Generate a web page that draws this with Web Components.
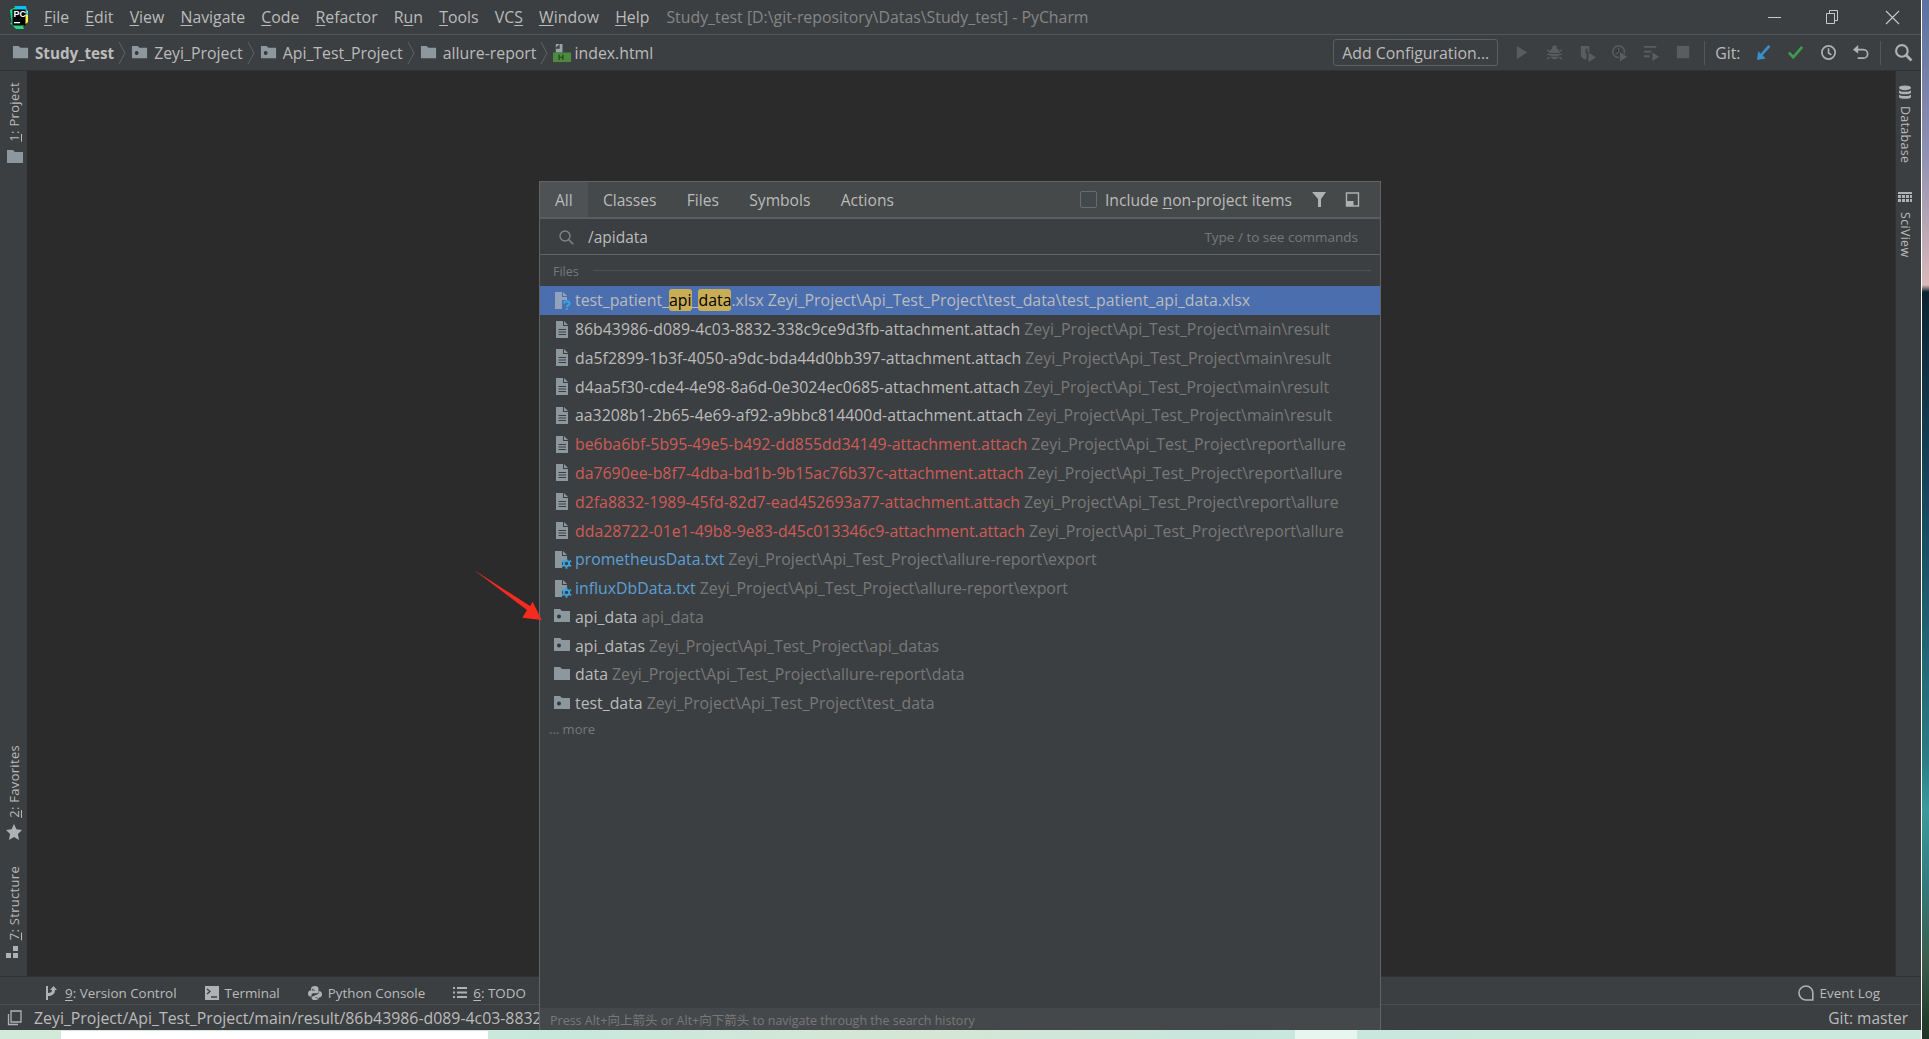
<!DOCTYPE html>
<html>
<head>
<meta charset="utf-8">
<title>PyCharm</title>
<style>
  html, body { margin: 0; height: 100%; overflow: hidden; background: #3c3f41; }
  body { font-family: "Open Sans", "Noto Sans CJK SC", sans-serif; }
</style>
</head>
<body>
<desktop-frame>
  <ide-window></ide-window>
</desktop-frame>

<script>
const ICONS = {
  folder: `<path fill="#8c979e" d="M1 2h6l2 2h8v11H1z"/>`,
  module: `<path fill="#8c979e" d="M1 2h6l2 2h8v11H1z"/><circle cx="6" cy="9.5" r="2" fill="#33383b"/>`,
  text: `<path fill="#8c979e" d="M3 1h7v5h5v12H3z"/><path fill="#8c979e" d="M11 1l4 4h-4z"/><path stroke="#3c3f41" stroke-width="1.2" d="M5.500 9.500h7.500M5.500 12h7.500M5.500 14.500h7.500"/>`,
  unknown: `<path fill="#8fa3bd" d="M2 1h7v5h5v12H2z"/><path fill="#8fa3bd" d="M10 1l4 4h-4z"/><path fill="#4b6eaf" d="M9 9h10v10H9z"/><path fill="none" stroke="#35a8e6" stroke-width="1.9" d="M11 12.500c0-3 5.500-3 5.500 0 0 2-2.700 1.800-2.700 3.600"/><rect x="12.800" y="17" width="2" height="2" fill="#35a8e6"/>`,
  gear: `<path fill="#8c979e" d="M2 1h7v5h5v5H9v7H2z"/><path fill="#8c979e" d="M10 1l4 4h-4z"/><path stroke="#3aa3dd" stroke-width="1.800" d="M13.500 8.200v10.600M8.900 10.800l9.200 5.400M8.900 16.200l9.200-5.400"/><circle cx="13.500" cy="13.500" r="3.600" fill="#3aa3dd"/><circle cx="13.500" cy="13.500" r="1.700" fill="#3c3f41"/>`,
  html: `<path fill="#9aa4aa" d="M3 0h7v9H3z"/><path fill="#3c3f41" d="M7 0L3 4v1h4z"/><rect y="9" width="19" height="10" fill="#4c8a3e"/><path stroke="#23401c" stroke-width="1.2" d="M6.500 11v6M10.500 11v6M6.500 14h4"/>`,
  search: `<circle cx="7" cy="7" r="5" fill="none" stroke="#7f8487" stroke-width="1.4"/><path stroke="#7f8487" stroke-width="1.6" d="M10.800 10.800l4.400 4.400"/>`,
  funnel: `<path fill="#afb1b3" d="M1 1h14L10 8v8H7V8z"/>`,
  layout: `<path fill="none" stroke="#afb1b3" stroke-width="1.4" d="M2 2h12v13H2z"/><path fill="#afb1b3" d="M2 10h7v5H2z"/>`,
  play: `<path fill="#5a5c5e" d="M3 2l11 7-11 7z"/>`,
  bug: `<ellipse cx="9" cy="10" rx="5.500" ry="6" fill="#5a5c5e"/><circle cx="9" cy="4" r="2.600" fill="#5a5c5e"/><path stroke="#5a5c5e" stroke-width="1.400" d="M1 6l3 2M17 6l-3 2M1 11h3M17 11h-3M1 16l3-2M17 16l-3-2"/><path stroke="#3c3f41" d="M4 10h10M4 13h10"/>`,
  cover: `<path fill="#5a5c5e" d="M2 2h9v6l-3 2v6l-3 0-3-3z"/><path fill="#5a5c5e" d="M10 9l8 5-8 5z"/><path fill="#3c3f41" d="M7 5h2v5H7z"/>`,
  profile: `<circle cx="8" cy="8" r="6.200" fill="none" stroke="#5a5c5e" stroke-width="1.600"/><path stroke="#5a5c5e" stroke-width="1.400" d="M8 4v4l-2.500 2.500"/><path fill="#5a5c5e" stroke="#3c3f41" d="M9 8l9 5.500-9 5.500z"/>`,
  runall: `<path stroke="#5a5c5e" stroke-width="2" d="M1 3h13M1 8h8M1 13h6"/><path fill="#5a5c5e" d="M10 9l7 4.500-7 4.500z"/>`,
  stop: `<rect x="2" y="2" width="13" height="13" fill="#5a5c5e"/>`,
  update: `<path fill="#3a8fc9" d="M14 1l2.400 2L8 12l3.200 3.200L2 17l1.400-9.400L6 10.400z"/>`,
  check: `<path fill="none" stroke="#3f9c4b" stroke-width="2.800" d="M2 9l4.600 5L16 3"/>`,
  clock: `<circle cx="9" cy="9" r="7" fill="none" stroke="#afb1b3" stroke-width="1.800"/><path fill="none" stroke="#afb1b3" stroke-width="1.700" d="M9 4.500V9.500l3 2"/>`,
  undo: `<path fill="none" stroke="#afb1b3" stroke-width="1.800" d="M5 6h7a4.300 4.300 0 0 1 0 9H6"/><path fill="#afb1b3" d="M6.500 1L1 6l5.500 4z"/>`,
  find: `<circle cx="7.500" cy="7.500" r="5.500" fill="none" stroke="#afb1b3" stroke-width="2"/><path stroke="#afb1b3" stroke-width="2.600" d="M11.600 11.600l5 5"/>`,
  star: `<path fill="#afb1b3" d="M8 0l2.400 5.300 5.600.7-4.100 3.900L13 16 8 13l-5 3 1.100-6.100L0 6l5.600-.7z"/>`,
  struct: `<path fill="#afb1b3" d="M7 0h5v5H7zM0 7h5v5H0zM7 7h5v5H7z"/>`,
  db: `<ellipse cx="7" cy="2.800" rx="6" ry="2.400" fill="#afb1b3"/><path fill="#afb1b3" d="M1 5.200c1.500 2 10.500 2 12 0v2.600c-1.500 2-10.500 2-12 0zM1 9.600c1.500 2 10.500 2 12 0v2.600c-1.500 2-10.500 2-12 0z"/>`,
  sci: `<path fill="#afb1b3" d="M0 1h14v2H0zM0 4h3v3H0zM4 4h3v3H4zM8 4h3v3H8zM12 4h2v3h-2zM0 8h3v3H0zM4 8h3v3H4zM8 8h3v3H8zM12 8h2v3h-2z"/>`,
  vcs: `<path fill="#afb1b3" d="M1 0h2v14H1zM3 7c3 0 4-1 4-3H5l3.500-4L12 4h-2c0 4-3 6-7 6z"/>`,
  term: `<rect width="14" height="14" fill="#afb1b3"/><path fill="none" stroke="#3c3f41" stroke-width="1.300" d="M2 3l3 2.500L2 8M6 11h6"/>`,
  python: `<path fill="#afb1b3" d="M3.500 6.500V3C3.500 1.200 5.500 0 8 0s4 1.200 4 3v3.500c0 1-.8 1.700-1.700 1.700H6c-1.200 0-2 .8-2 2V12H2.500C1 12 0 10.500 0 8.500S1 5 2.500 5H8v-.8H6V2.800H5.500z"/><path fill="#afb1b3" d="M12.500 9.500V13c0 1.800-2 3-4.500 3s-4-1.200-4-3V12.400h.5l5.700-2.800c1.200 0 2-.8 2-2V6H13.500C15 6 16 7.500 16 9.500S15 13 13.500 13H8v.8h2v1.400h.5z"/>`,
  todo: `<path stroke="#afb1b3" stroke-width="2" d="M0 2h2M4 2h10M0 6.500h2M4 6.500h10M0 11h2M4 11h10"/>`,
  log: `<path fill="none" stroke="#afb1b3" stroke-width="1.600" d="M8 1a6.800 6.800 0 0 1 6.800 6.800V15H8A7 7 0 0 1 8 1z"/>`,
  copy: `<path fill="none" stroke="#afb1b3" stroke-width="1.300" d="M4 1h10v11H4zM1.500 4v10.500H11"/>`,
  min: `<path stroke="#c8c8c8" stroke-width="1" d="M1 7.500h13"/>`,
  restore: `<path fill="none" stroke="#c8c8c8" d="M.5 3.500h8v10h-8zM3.500 3.500v-3h8v10h-3"/>`,
  close: `<path stroke="#c8c8c8" stroke-width="1.100" d="M1 1l13 13M14 1L1 14"/>`
};

class IdeIcon extends HTMLElement {
  connectedCallback() {
    const size = this.getAttribute("size") || 18;
    const box = this.getAttribute("box") || "0 0 19 19";
    this.attachShadow({ mode: "open" }).innerHTML = `
      <style>
        :host { display: inline-flex; flex: none; }
        svg { width: ${size}px; height: ${size}px; display: block; overflow: visible; }
      </style>
      <svg viewBox="${box}">${ICONS[this.getAttribute("name")]}</svg>`;
  }
}
customElements.define("ide-icon", IdeIcon);

class PcLogo extends HTMLElement {
  connectedCallback() {
    this.attachShadow({ mode: "open" }).innerHTML = `
      <style>
        :host { display: inline-flex; flex: none; }
        svg { width: 20px; height: 25px; display: block; }
        text { font: 700 9px "Liberation Sans", sans-serif; fill: #fff; }
      </style>
      <svg viewBox="0 0 20 25">
        <path fill="#21d789" d="M1 5l8-4 3 6-9 12z"/>
        <path fill="#fcf84a" d="M19 6l-8-5 2 21 6-5z"/>
        <path fill="#07c3f2" d="M5 1h12l2 9-8-2z"/>
        <path fill="#21d789" d="M1 18l6 6h8l-3-8z"/>
        <rect x="3.500" y="4.500" width="13" height="16" fill="#000"/>
        <text x="4.500" y="12">PC</text>
        <rect x="5" y="17" width="6" height="1.300" fill="#fff"/>
      </svg>`;
  }
}
customElements.define("pc-logo", PcLogo);

class TitleBar extends HTMLElement {
  connectedCallback() {
    this.attachShadow({ mode: "open" }).innerHTML = `
      <style>
        :host {
          display: flex; align-items: center; height: 35px; box-sizing: border-box;
          background: #3c3f41; border-bottom: 1px solid #515658;
          padding-left: 9px; font-size: 15.85px; color: #bbbbbb; white-space: nowrap;
        }
        .menu { display: flex; margin-left: 15px; gap: 16.2px; }
        .title { margin-left: 17px; color: #868686; }
        .win { margin-left: auto; display: flex; gap: 44px; padding-right: 21px; }
        u { text-underline-offset: 2px; }
      </style>
      <pc-logo></pc-logo>
      <div class="menu">
        <span><u>F</u>ile</span><span><u>E</u>dit</span><span><u>V</u>iew</span>
        <span><u>N</u>avigate</span><span><u>C</u>ode</span><span><u>R</u>efactor</span>
        <span>R<u>u</u>n</span><span><u>T</u>ools</span><span>VC<u>S</u></span>
        <span><u>W</u>indow</span><span><u>H</u>elp</span>
      </div>
      <span class="title">Study_test [D:\\git-repository\\Datas\\Study_test] - PyCharm</span>
      <div class="win">
        <ide-icon name="min" size="15" box="0 0 15 15"></ide-icon>
        <ide-icon name="restore" size="15" box="0 0 15 15"></ide-icon>
        <ide-icon name="close" size="15" box="0 0 15 15"></ide-icon>
      </div>`;
  }
}
customElements.define("title-bar", TitleBar);

class NavBar extends HTMLElement {
  connectedCallback() {
    const crumb = (icon, text, bold) => `
      <span class="crumb"><ide-icon name="${icon}"></ide-icon><span class="${bold ? "b" : ""}">${text}</span></span>
      <svg class="chev" viewBox="0 0 8 24"><path fill="none" stroke="#5f6365" d="M1 1l6 11-6 11"/></svg>`;
    const tool = (name) => `<ide-icon name="${name}" size="18"></ide-icon>`;
    this.attachShadow({ mode: "open" }).innerHTML = `
      <style>
        :host {
          display: flex; align-items: center; height: 36px; box-sizing: border-box;
          background: #3c3f41; border-bottom: 1px solid #323232;
          padding-left: 12px; font-size: 15.85px; color: #bbbbbb; white-space: nowrap;
        }
        .crumb { display: flex; align-items: center; gap: 5px; }
        .b { font-weight: 700; font-size: 15.2px; }
        .chev { width: 8px; height: 24px; margin: 0 5px 0 4px; flex: none; }
        .right { margin-left: auto; display: flex; align-items: center; }
        button {
          font: inherit; color: #bbbbbb; background: #3c3f41; height: 27px; width: 165px;
          border: 1px solid #5e6060; border-radius: 3px; padding: 0;
        }
        .tools { display: flex; align-items: center; gap: 14.2px; margin-left: 16px; }
        .sep { width: 1px; height: 24px; background: #515658; }
        .git { margin-left: 10px; margin-right: 14px; }
        .vcs { display: flex; align-items: center; gap: 14.5px; }
        .find { margin: 0 7px 0 13px; }
      </style>
      ${crumb("folder", "Study_test", true)}
      ${crumb("module", "Zeyi_Project")}
      ${crumb("module", "Api_Test_Project")}
      ${crumb("folder", "allure-report")}
      <span class="crumb" style="gap:3px"><ide-icon name="html"></ide-icon><span>index.html</span></span>
      <div class="right">
        <button>Add Configuration...</button>
        <div class="tools">
          ${tool("play")}${tool("bug")}${tool("cover")}${tool("profile")}${tool("runall")}${tool("stop")}
        </div>
        <span class="sep" style="margin-left:11px"></span>
        <span class="git">Git:</span>
        <div class="vcs">${tool("update")}${tool("check")}${tool("clock")}${tool("undo")}</div>
        <span class="sep" style="margin-left:10px"></span>
        <ide-icon class="find" name="find" size="20"></ide-icon>
      </div>`;
  }
}
customElements.define("nav-bar", NavBar);

// one rotated button in the left or right tool strip
class StripItem extends HTMLElement {
  connectedCallback() {
    const side = this.getAttribute("side") || "left";
    const icon = `<ide-icon name="${this.getAttribute("icon")}" size="15" box="0 0 15 15"></ide-icon>`;
    this.attachShadow({ mode: "open" }).innerHTML = `
      <style>
        :host { display: flex; flex-direction: column; align-items: center; gap: 6px; color: #bbbbbb; font-size: 13px; letter-spacing: .3px; }
        :host([side="right"]) { font-size: 12.5px; }
        span { writing-mode: vertical-rl; white-space: nowrap; }
        :host([side="left"]) span { transform: rotate(180deg); }
        u { text-underline-offset: 2px; }
      </style>
      ${side === "right" ? icon : ""}<span><slot></slot></span>${side === "left" ? icon : ""}`;
  }
}
customElements.define("strip-item", StripItem);

class ToolBar extends HTMLElement {
  connectedCallback() {
    this.attachShadow({ mode: "open" }).innerHTML = `
      <style>
        :host {
          display: flex; align-items: center; height: 29px; box-sizing: border-box;
          background: #3c3f41; border-top: 1px solid #323232; border-bottom: 1px solid #4a4c4e;
          padding: 4px 0 0 45px; font-size: 13.4px; color: #bbbbbb; white-space: nowrap;
        }
        .item { display: flex; align-items: center; gap: 6px; margin-right: 28px; }
        .end { margin: 0 41px 0 auto; }
        u { text-underline-offset: 2px; }
      </style>
      <span class="item"><ide-icon name="vcs" size="14" box="0 0 14 14"></ide-icon><span><u>9</u>: Version Control</span></span>
      <span class="item"><ide-icon name="term" size="14" box="0 0 14 14"></ide-icon><span>Terminal</span></span>
      <span class="item"><ide-icon name="python" size="14" box="0 0 16 16"></ide-icon><span>Python Console</span></span>
      <span class="item"><ide-icon name="todo" size="14" box="0 0 14 14"></ide-icon><span><u>6</u>: TODO</span></span>
      <span class="item end"><ide-icon name="log" size="16" box="0 0 16 16"></ide-icon><span>Event Log</span></span>`;
  }
}
customElements.define("tool-bar", ToolBar);

class StatusBar extends HTMLElement {
  connectedCallback() {
    this.attachShadow({ mode: "open" }).innerHTML = `
      <style>
        :host {
          display: flex; align-items: center; height: 25px; box-sizing: border-box;
          background: #3c3f41; padding: 0 13px 0 7px; font-size: 15.5px; color: #bbbbbb; white-space: nowrap;
        }
        .path { margin-left: 11px; font-size: 15.85px; }
        .git { margin-left: auto; }
      </style>
      <ide-icon name="copy" size="16" box="0 0 16 16"></ide-icon>
      <span class="path">Zeyi_Project/Api_Test_Project/main/result/86b43986-d089-4c03-8832</span>
      <span class="git">Git: master</span>`;
  }
}
customElements.define("status-bar", StatusBar);

class ResultRow extends HTMLElement {
  connectedCallback() {
    this.attachShadow({ mode: "open" }).innerHTML = `
      <style>
        :host {
          display: flex; align-items: center; height: 28.78px; padding-left: 13px; gap: 3px;
          color: #bbbbbb; white-space: nowrap; font-size: 15.85px;
        }
        :host([tone="red"]) .name { color: #cf5b56; }
        :host([tone="blue"]) .name { color: #5c9fd6; }
        :host([selected]) { background: #4b6eaf; }
        .path { color: #787878; margin-left: 4px; }
        :host([selected]) .path { color: #bbbbbb; }
        ::slotted(mark) { background: #c9ad55; color: #000; border-radius: 3px; }
      </style>
      <ide-icon name="${this.getAttribute("icon")}" size="19"></ide-icon>
      <span><span class="name"><slot></slot></span><span class="path">${this.getAttribute("path")}</span></span>`;
  }
}
customElements.define("result-row", ResultRow);

const MAIN = "Zeyi_Project\\Api_Test_Project\\main\\result";
const ALLURE = "Zeyi_Project\\Api_Test_Project\\report\\allure";
const EXPORT = "Zeyi_Project\\Api_Test_Project\\allure-report\\export";
const RESULTS = [
  ["text", "", "86b43986-d089-4c03-8832-338c9ce9d3fb-attachment.attach", MAIN],
  ["text", "", "da5f2899-1b3f-4050-a9dc-bda44d0bb397-attachment.attach", MAIN],
  ["text", "", "d4aa5f30-cde4-4e98-8a6d-0e3024ec0685-attachment.attach", MAIN],
  ["text", "", "aa3208b1-2b65-4e69-af92-a9bbc814400d-attachment.attach", MAIN],
  ["text", "red", "be6ba6bf-5b95-49e5-b492-dd855dd34149-attachment.attach", ALLURE],
  ["text", "red", "da7690ee-b8f7-4dba-bd1b-9b15ac76b37c-attachment.attach", ALLURE],
  ["text", "red", "d2fa8832-1989-45fd-82d7-ead452693a77-attachment.attach", ALLURE],
  ["text", "red", "dda28722-01e1-49b8-9e83-d45c013346c9-attachment.attach", ALLURE],
  ["gear", "blue", "prometheusData.txt", EXPORT],
  ["gear", "blue", "influxDbData.txt", EXPORT],
  ["module", "", "api_data", "api_data"],
  ["module", "", "api_datas", "Zeyi_Project\\Api_Test_Project\\api_datas"],
  ["folder", "", "data", "Zeyi_Project\\Api_Test_Project\\allure-report\\data"],
  ["module", "", "test_data", "Zeyi_Project\\Api_Test_Project\\test_data"],
];

class SearchDialog extends HTMLElement {
  connectedCallback() {
    const rows = RESULTS.map(([icon, tone, name, path]) =>
      `<result-row icon="${icon}" tone="${tone}" path="${path}">${name}</result-row>`).join("");
    this.attachShadow({ mode: "open" }).innerHTML = `
      <style>
        :host {
          display: flex; flex-direction: column; position: absolute; left: 539px; top: 181px;
          width: 842px; height: 849px; box-sizing: border-box;
          background: #3c3f41; border: 1px solid #616365; border-bottom: 0;
          color: #bbbbbb;
        }
        .tabs {
          display: flex; align-items: center; height: 37px; flex: none; background: #45494a; box-sizing: border-box;
          border-bottom: 2px solid #5b5e60; font-size: 15.6px;
        }
        .tab { height: 100%; display: flex; align-items: center; padding: 0 15.2px; }
        .tab.on { background: #4e5254; padding: 0 15px; }
        .opts { margin-left: auto; display: flex; align-items: center; padding-right: 19px; font-size: 15.7px; }
        .box { width: 15px; height: 15px; border: 1px solid #6b6b6b; border-radius: 2px; background: #43494a; margin-right: 8px; }
        .opts u { text-underline-offset: 2px; }
        .search {
          display: flex; align-items: center; height: 36px; flex: none; box-sizing: border-box;
          border-bottom: 1px solid #616365; padding: 0 22px 0 18px; font-size: 15.5px;
        }
        .search span { margin-left: 14px; }
        .search .hint { margin-left: auto; color: #787878; font-size: 13.5px; }
        .group { display: flex; align-items: center; height: 31px; box-sizing: border-box; padding: 2px 9px 0 13px; gap: 14px; color: #787878; font-size: 12.5px; flex: none; }
        .group i { flex: 1; height: 1px; background: #4e5052; margin-top: -2px; }
        .list { flex: 1; min-height: 0; }
        .more { padding: 3px 9px; color: #787878; font-size: 13px; }
        .foot { height: 22px; flex: none; background: #45484a; color: #787878; font-size: 12.5px; display: flex; align-items: center; padding-left: 10px; }
      </style>
      <div class="tabs">
        <span class="tab on">All</span><span class="tab">Classes</span><span class="tab">Files</span>
        <span class="tab">Symbols</span><span class="tab">Actions</span>
        <div class="opts">
          <span class="box"></span>
          <span>Include <u>n</u>on-project items</span>
          <ide-icon name="funnel" size="17" box="0 0 17 17" style="margin-left:19px"></ide-icon>
          <ide-icon name="layout" size="17" box="0 0 16 17" style="margin-left:16px"></ide-icon>
        </div>
      </div>
      <div class="search">
        <ide-icon name="search" size="16" box="0 0 16 16"></ide-icon>
        <span>/apidata</span>
        <span class="hint">Type / to see commands</span>
      </div>
      <div class="group"><span>Files</span><i></i></div>
      <div class="list">
        <result-row icon="unknown" selected path="Zeyi_Project\\Api_Test_Project\\test_data\\test_patient_api_data.xlsx">test_patient_<mark>api</mark>_<mark>data</mark>.xlsx</result-row>
        ${rows}
        <div class="more">... more</div>
      </div>
      <div class="foot">Press Alt+向上箭头 or Alt+向下箭头 to navigate through the search history</div>`;
  }
}
customElements.define("search-dialog", SearchDialog);

class IdeWindow extends HTMLElement {
  connectedCallback() {
    this.attachShadow({ mode: "open" }).innerHTML = `
      <style>
        :host { display: flex; flex-direction: column; position: relative; height: 1030px; background: #3c3f41; overflow: hidden; }
        .main { flex: 1; min-height: 0; display: flex; }
        .strip { flex: none; width: 27px; display: flex; flex-direction: column; justify-content: space-between; background: #3c3f41; box-sizing: border-box; }
        .strip .group { display: flex; flex-direction: column; gap: 27px; }
        .left { padding: 11px 0 15px; }
        .right { width: 26px; border-left: 1px solid #323232; padding: 14px 6px 0 0; }
        .editor { flex: 1; background: #2b2b2b; }
        .arrow { position: absolute; left: 470px; top: 565px; width: 80px; height: 60px; }
      </style>
      <title-bar></title-bar>
      <nav-bar></nav-bar>
      <div class="main">
        <div class="strip left">
          <div class="group"><strip-item side="left" icon="folder"><u>1</u>: Project</strip-item></div>
          <div class="group">
            <strip-item side="left" icon="star"><u>2</u>: Favorites</strip-item>
            <strip-item side="left" icon="struct"><u>7</u>: Structure</strip-item>
          </div>
        </div>
        <div class="editor"></div>
        <div class="strip right">
          <div class="group" style="gap:28px">
            <strip-item side="right" icon="db">Database</strip-item>
            <strip-item side="right" icon="sci">SciView</strip-item>
          </div>
        </div>
      </div>
      <tool-bar></tool-bar>
      <status-bar></status-bar>
      <search-dialog></search-dialog>
      <svg class="arrow" viewBox="0 0 80 60">
        <path fill="#f62b1f" d="M4 5L60 41 62.700 36.700 71.700 55 52.300 52.700 57 45z"/>
      </svg>`;
  }
}
customElements.define("ide-window", IdeWindow);

class DesktopFrame extends HTMLElement {
  connectedCallback() {
    this.attachShadow({ mode: "open" }).innerHTML = `
      <style>
        :host { display: flex; height: 1039px; width: 1929px; overflow: hidden; background: #fff; }
        .col { width: 1921px; flex: none; }
        .wall {
          position: relative; height: 9px; overflow: hidden;
          background: linear-gradient(90deg, #d2ead9 0%, #c8e8dc 30%, #d6e6d4 48%, #c9e6dc 62%, #cce9de 100%);
        }
        .sheet { position: absolute; left: 61px; top: 1px; width: 427px; height: 8px; background: #fff; }
        .pale { position: absolute; left: 1295px; top: 0; width: 62px; height: 9px; background: #e8f6f0; }
        .clock { position: absolute; left: 1791px; top: 6px; font: 13px "Open Sans", sans-serif; color: #111; }
        .photo {
          flex: 1; margin-left: 1px;
          background: linear-gradient(180deg, #5b719f 0, #8d90b1 150px, #d9b9b8 285px, #0e2430 292px, #15445a 480px, #1f6070 620px, #2b7d86 760px, #3c9a9c 810px, #327d7f 880px, #3d5d4c 960px, #1c3423 1039px);
        }
      </style>
      <div class="col">
        <slot></slot>
        <div class="wall"><div class="sheet"></div><div class="pale"></div><span class="clock">13:56</span></div>
      </div>
      <div class="photo"></div>`;
  }
}
customElements.define("desktop-frame", DesktopFrame);
</script>
</body>
</html>
